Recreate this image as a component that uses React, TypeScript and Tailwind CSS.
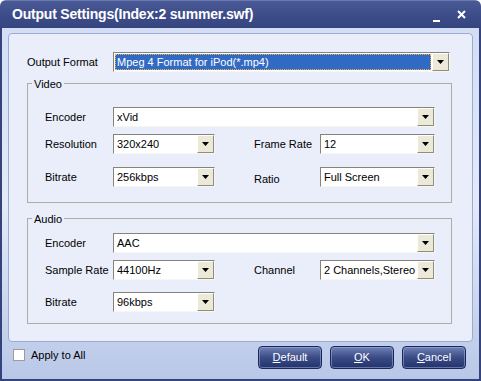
const font = "font-['Liberation_Sans',Arial,sans-serif]";

type ComboProps = {
  value: string;
  width: string;
  selected?: boolean;
};

const Combo = ({ value, width, selected }: ComboProps) => {
  return (
    <div
      className={`flex h-[20px] shrink-0 border border-t-[#85847a] border-l-[#85847a] border-b-[#f7f6f1] border-r-[#f7f6f1] bg-white ${width}`}
    >
      <div className="flex min-w-0 flex-1 items-center p-[1px]">
        {selected ? (
          <div className="flex h-full flex-1 items-center border border-dotted border-[#e8b040] bg-[#316ac5] pl-[1px] text-white">
            {value}
          </div>
        ) : (
          <div className="flex h-full flex-1 items-center pl-[2px] text-black">{value}</div>
        )}
      </div>
      <div className="flex w-[17px] shrink-0 items-center justify-center border border-t-white border-l-white border-b-[#8f8d80] border-r-[#8f8d80] bg-[#ece9d8]">
        <svg width="7" height="4" viewBox="0 0 7 4">
          <path d="M0 0h7L3.5 4z" fill="#000" />
        </svg>
      </div>
    </div>
  );
};

const Group = ({ title, children, className }: { title: string; children: React.ReactNode; className: string }) => {
  return (
    <div className={`relative ml-[18px] w-[425px] border border-[#aeada4] ${className}`}>
      <span className="absolute -top-[7px] left-[4px] bg-[#e9eefa] px-[2px] leading-[14px]">{title}</span>
      {children}
    </div>
  );
};

const Btn = ({ first, rest }: { first: string; rest: string }) => {
  return (
    <button className="flex h-[23px] w-[64px] items-center justify-center rounded-[4px] border border-[#1b2758] bg-gradient-to-b from-[#7282b8] via-[#3a4b86] to-[#23336c] text-[11px] text-white shadow-[inset_0_0_0_1px_rgba(160,175,220,0.55)]">
      <span>
        <span className="underline">{first}</span>
        {rest}
      </span>
    </button>
  );
};

const App = () => {
  return (
    <div className={`flex h-[381px] w-[481px] flex-col overflow-hidden rounded-t-[6px] bg-white text-[11px] text-black ${font}`}>
      <div className="flex h-[28px] shrink-0 items-center border-t border-[#6a7ab0] bg-gradient-to-b from-[#4a5a96] via-[#3d4d8a] to-[#36457f] pl-[12px] pr-[15px] text-white">
        <span className="flex-1 text-[14px] font-bold tracking-[-0.2px]">Output Settings(Index:2 summer.swf)</span>
        <svg width="9" height="9" viewBox="0 0 9 9" className="mr-[16px] mt-[8px]">
          <rect x="1" y="6" width="7" height="2" fill="#fff" />
        </svg>
        <svg width="9" height="9" viewBox="0 0 9 9" className="mb-[1px]">
          <path d="M1 1l7 7M8 1L1 8" stroke="#fff" strokeWidth="2" />
        </svg>
      </div>

      <div className="flex flex-1 flex-col border-x-2 border-b-2 border-[#34437c] bg-gradient-to-b from-[#d3def5] via-[#e4eaf8] to-[#b9c8e8]">
        <div className="mx-[6px] mt-[5px] flex h-[309px] flex-col rounded-[4px] border border-[#9eabd0] bg-[#e9eefa]">
          <div className="ml-[18px] mt-[18px] flex items-center">
            <span className="w-[86px]">Output Format</span>
            <Combo value="Mpeg 4 Format for iPod(*.mp4)" width="w-[337px]" selected />
          </div>

          <Group title="Video" className="mt-[11px] h-[120px] pl-[17px] pt-[23px]">
            <div className="flex items-center">
              <span className="w-[68px]">Encoder</span>
              <Combo value="xVid" width="w-[322px]" />
            </div>
            <div className="mt-[7px] flex items-center">
              <span className="w-[68px]">Resolution</span>
              <Combo value="320x240" width="w-[102px]" />
              <span className="ml-[39px] w-[66px]">Frame Rate</span>
              <Combo value="12" width="w-[115px]" />
            </div>
            <div className="mt-[12px] flex items-center">
              <span className="w-[68px]">Bitrate</span>
              <Combo value="256kbps" width="w-[102px]" />
              <span className="ml-[39px] mt-[5px] w-[66px]">Ratio</span>
              <Combo value="Full Screen" width="w-[115px]" />
            </div>
          </Group>

          <Group title="Audio" className="mt-[15px] h-[106px] pl-[17px] pt-[14px]">
            <div className="flex items-center">
              <span className="w-[68px]">Encoder</span>
              <Combo value="AAC" width="w-[322px]" />
            </div>
            <div className="mt-[7px] flex items-center">
              <span className="w-[68px]">Sample Rate</span>
              <Combo value="44100Hz" width="w-[102px]" />
              <span className="ml-[39px] w-[66px]">Channel</span>
              <Combo value="2 Channels,Stereo" width="w-[115px]" />
            </div>
            <div className="mt-[12px] flex items-center">
              <span className="w-[68px]">Bitrate</span>
              <Combo value="96kbps" width="w-[102px]" />
            </div>
          </Group>
        </div>

        <div className="ml-[11px] mr-[13px] mt-[4px] flex items-start">
          <div className="mt-[1px] flex flex-1 items-center">
            <div className="h-[12px] w-[12px] border border-[#9c9c94] bg-white" />
            <span className="ml-[6px]">Apply to All</span>
          </div>
          <div className="flex gap-[8px]">
            <Btn first="D" rest="efault" />
            <Btn first="O" rest="K" />
            <Btn first="C" rest="ancel" />
          </div>
        </div>
      </div>
    </div>
  );
};

export default App;
